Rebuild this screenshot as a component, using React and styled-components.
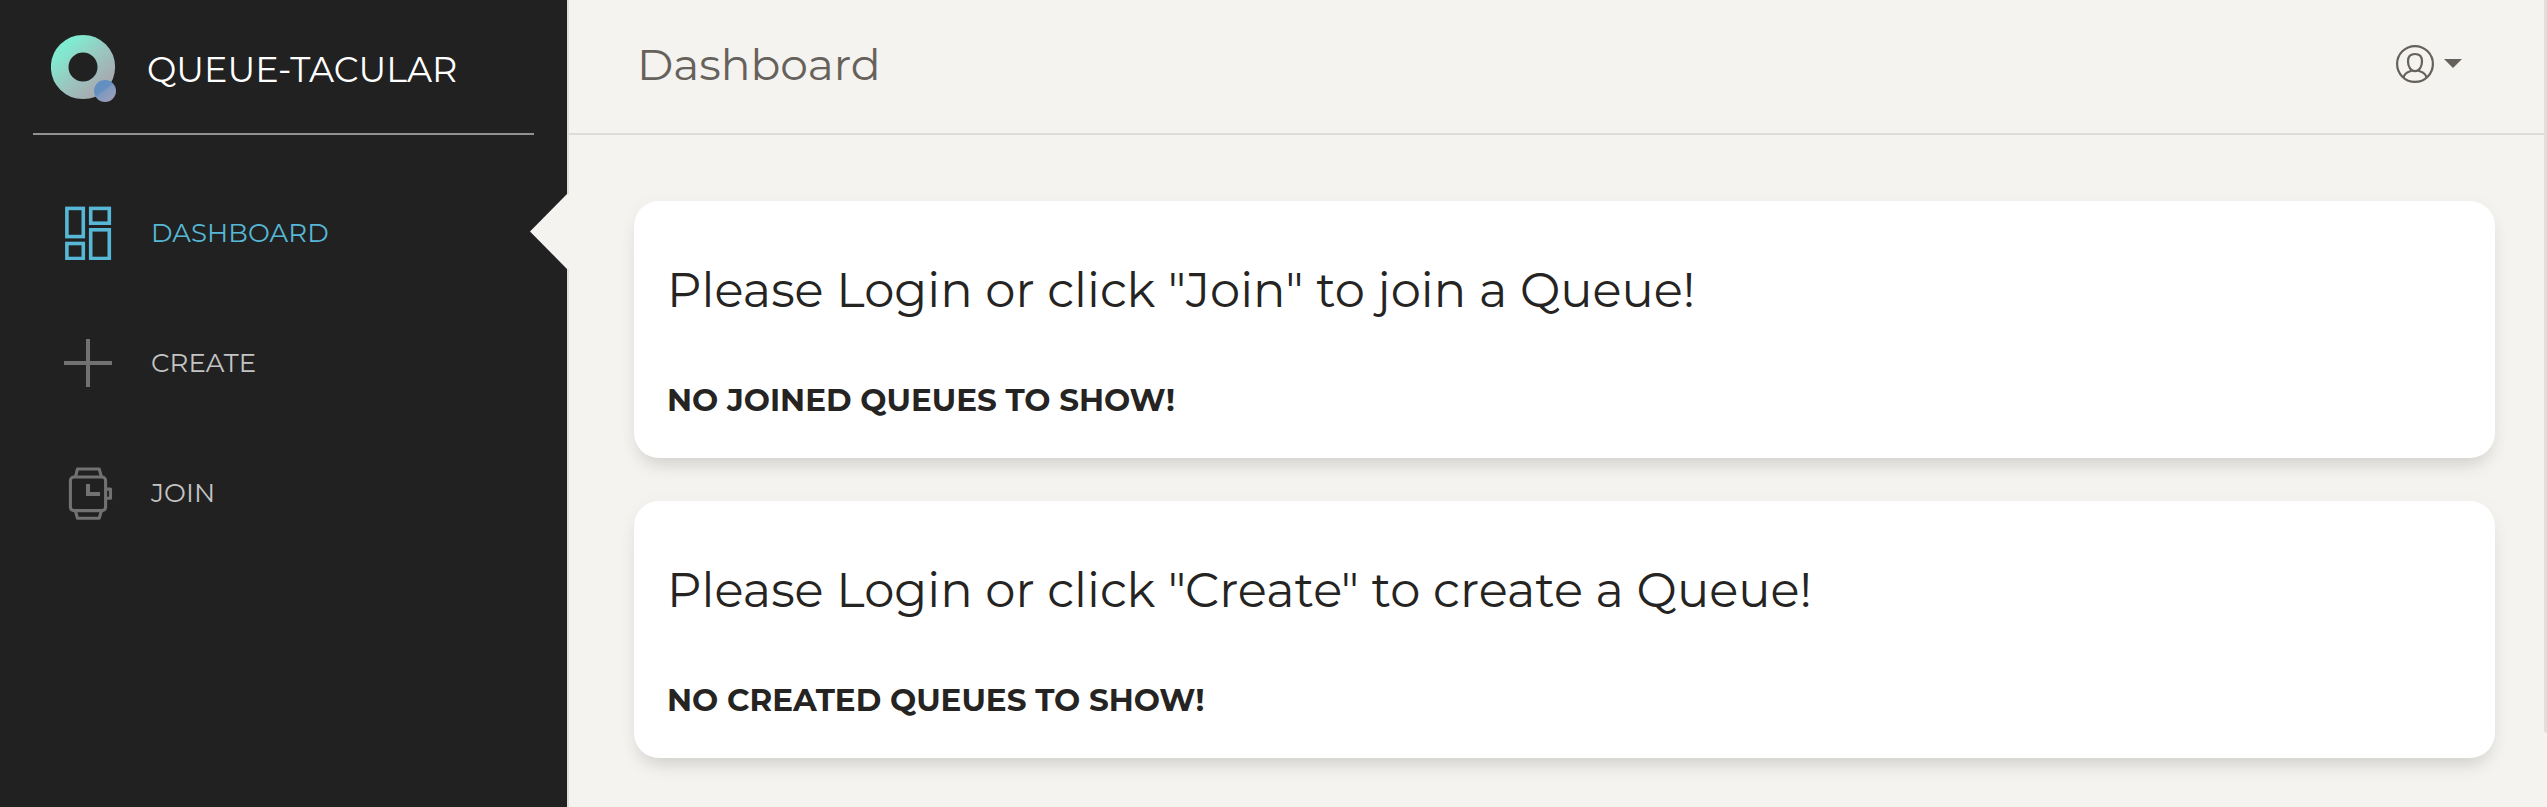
import React from 'react';
import styled, { createGlobalStyle } from 'styled-components';

const GlobalStyle = createGlobalStyle`
  * { box-sizing: border-box; }
  body {
    margin: 0;
    overflow: hidden;
    background: #f4f3ef;
    font-family: Montserrat, Inter, "Liberation Sans", sans-serif;
    font-weight: 400;
    white-space: nowrap;
  }
  h1, h2, h3, p { margin: 0; font-weight: 400; }
`;

const Page = styled.div`
  display: flex;
  width: 100%;
  height: 100vh;
`;

const Sidebar = styled.aside`
  position: relative;
  flex: none;
  width: 569px;
  background: #212121;
  border-right: 2px solid #dedddb;
`;

const Brand = styled.div`
  display: flex;
  align-items: center;
  height: 135px;
  margin: 0 33px;
  padding: 4px 0 0 18px;
  border-bottom: 2px solid #929292;
`;

const BrandLogo = styled.svg`
  display: block;
  width: 66px;
  height: 68px;
  margin-bottom: 2px;
`;

const BrandName = styled.span`
  margin: 2px 0 0 30px;
  font-size: 35px;
  line-height: 44px;
  color: #ffffff;
`;

const Nav = styled.nav`
  display: flex;
  flex-direction: column;
  padding-top: 33px;
`;

const NavItem = styled.a`
  position: relative;
  display: flex;
  align-items: center;
  height: 130px;
  padding-left: 64px;
  font-size: 26px;
  line-height: 32px;
  letter-spacing: 0.08px;
  color: ${(p) => (p.$active ? '#56b8d6' : '#c4c4c4')};

  svg {
    display: block;
    width: 50px;
    height: 54px;
    margin-right: 37px;
    color: ${(p) => (p.$active ? '#56b8d6' : '#727272')};
  }
`;

const ActiveMarker = styled.span`
  position: absolute;
  top: 26px;
  right: -2px;
  width: 39px;
  height: 75px;
  background: #f4f3ef;
  clip-path: polygon(100% 0, 37px 0, 0 50%, 37px 100%, 100% 100%);
`;

const Main = styled.main`
  flex: 1;
  min-width: 0;
`;

const Header = styled.header`
  display: flex;
  align-items: center;
  justify-content: space-between;
  height: 135px;
  padding: 0 85px 5px 68px;
  border-bottom: 2px solid #dddcd8;
`;

const Title = styled.h1`
  font-size: 44px;
  line-height: 54px;
  color: #66615b;
`;

const UserMenu = styled.div`
  display: flex;
  align-items: center;
  gap: 10px;
  color: #66615b;
`;

const UserIcon = styled.svg`
  display: block;
  width: 38px;
  height: 38px;
`;

const Caret = styled.span`
  width: 0;
  height: 0;
  margin-bottom: 1px;
  border: 9px solid transparent;
  border-top-color: currentColor;
  border-bottom: 0;
`;

const Cards = styled.div`
  display: flex;
  flex-direction: column;
  gap: 43.5px;
  padding: 66px 52px 0 65px;
`;

const Card = styled.section`
  height: 256.5px;
  padding: 59px 33px 0;
  border-radius: 25px;
  background: #ffffff;
  box-shadow: 0 12px 19px -7px rgba(0, 0, 0, 0.15), 0 2px 20px rgba(0, 0, 0, 0.03);
  color: #252422;
`;

const CardHeading = styled.h2`
  font-size: 48px;
  line-height: 60px;
  letter-spacing: 0.04px;
`;

const CardStatus = styled.h3`
  margin-top: 61px;
  font-size: 31px;
  font-weight: 700;
  line-height: 38px;
`;

const ScrollTrack = styled.div`
  position: absolute;
  top: 0;
  right: 0;
  width: 3px;
  height: 733px;
  border-bottom-left-radius: 3px;
  background: #dfdfdc;
`;

function Logo() {
  return (
    <BrandLogo viewBox="0 0 66 68">
      <defs>
        <linearGradient id="ring" x1="0.1" y1="0.1" x2="0.85" y2="0.9">
          <stop offset="0" stopColor="#80ebd1" />
          <stop offset="0.5" stopColor="#98c9c0" />
          <stop offset="1" stopColor="#a6adb2" />
        </linearGradient>
        <linearGradient id="dot" x1="0.2" y1="0.1" x2="0.8" y2="0.9">
          <stop offset="0" stopColor="#5f8fc4" />
          <stop offset="0.42" stopColor="#6590c0" />
          <stop offset="0.5" stopColor="#8099c0" />
          <stop offset="1" stopColor="#989fba" />
        </linearGradient>
      </defs>
      <circle cx="32" cy="33" r="23.3" fill="none" stroke="url(#ring)" strokeWidth="17.6" />
      <circle cx="54" cy="57" r="11" fill="url(#dot)" />
    </BrandLogo>
  );
}

function DashboardIcon() {
  return (
    <svg viewBox="0 0 50 54" fill="none" stroke="currentColor" strokeWidth="3.6">
      <rect x="2.9" y="2.4" width="16.4" height="28.2" />
      <rect x="26.7" y="2.4" width="18.6" height="14.8" />
      <rect x="2.9" y="37.5" width="16.4" height="15" />
      <rect x="26.7" y="23.8" width="18.6" height="28.7" />
    </svg>
  );
}

function PlusIcon() {
  return (
    <svg viewBox="0 0 50 54" fill="none" stroke="currentColor" strokeWidth="4">
      <path d="M0 27h48M24 3v48" />
    </svg>
  );
}

function WatchIcon() {
  return (
    <svg viewBox="0 0 50 54" fill="none" stroke="currentColor" strokeWidth="3.1" strokeLinejoin="round">
      <rect x="6.4" y="11" width="35.2" height="33.6" rx="3.5" />
      <path d="M11.5 10.6l2-7.6h21.7l2.2 7.6M11.5 45l2 7.3h21.7l2.2-7.3" />
      <path d="M42.5 23.1h4v9.2h-4" />
      <path d="M24 17.9v10h12" strokeWidth="4" strokeLinejoin="miter" />
    </svg>
  );
}

function AccountIcon() {
  return (
    <UserIcon viewBox="0 0 38 38" fill="none" stroke="currentColor" strokeWidth="2.2">
      <circle cx="19" cy="19" r="17.9" />
      <path d="M19 9c4.6 0 7 3 7 7.2 0 5.2-2.6 10-7 10s-7-4.8-7-10C12 12 14.4 9 19 9z" />
      <path d="M15.6 24.6v.4c0 .6-.5 1-1.4 1.3C10.5 27.6 8 28.8 7.6 32.7M22.4 24.6v.4c0 .6.5 1 1.4 1.3 3.7 1.3 6.2 2.5 6.6 6.4" />
    </UserIcon>
  );
}

const navItems = [
  { label: 'DASHBOARD', Icon: DashboardIcon, active: true },
  { label: 'CREATE', Icon: PlusIcon },
  { label: 'JOIN', Icon: WatchIcon },
];

const cards = [
  { heading: 'Please Login or click "Join" to join a Queue!', status: 'NO JOINED QUEUES TO SHOW!' },
  { heading: 'Please Login or click "Create" to create a Queue!', status: 'NO CREATED QUEUES TO SHOW!' },
];

export default function App() {
  return (
    <Page>
      <GlobalStyle />
      <Sidebar>
        <Brand>
          <Logo />
          <BrandName>QUEUE-TACULAR</BrandName>
        </Brand>
        <Nav>
          {navItems.map(({ label, Icon, active }) => (
            <NavItem key={label} $active={active}>
              <Icon />
              <span>{label}</span>
              {active && <ActiveMarker />}
            </NavItem>
          ))}
        </Nav>
      </Sidebar>
      <Main>
        <Header>
          <Title>Dashboard</Title>
          <UserMenu>
            <AccountIcon />
            <Caret />
          </UserMenu>
        </Header>
        <Cards>
          {cards.map((card) => (
            <Card key={card.heading}>
              <CardHeading>{card.heading}</CardHeading>
              <CardStatus>{card.status}</CardStatus>
            </Card>
          ))}
        </Cards>
      </Main>
      <ScrollTrack />
    </Page>
  );
}
